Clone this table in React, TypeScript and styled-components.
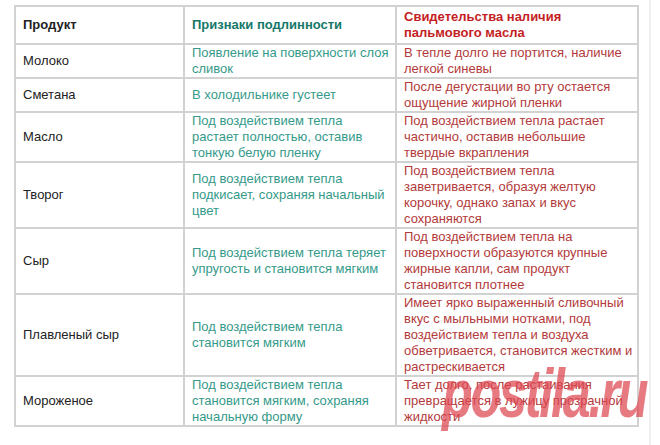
import * as React from 'react';
import styled, { createGlobalStyle } from 'styled-components';

const Global = createGlobalStyle`
  html, body {
    margin: 0;
    padding: 0;
    background: #ffffff;
  }
  body {
    font-family: "Liberation Sans", Arial, sans-serif;
  }
`;

const Page = styled.div`
  position: relative;
  width: 660px;
  height: 445px;
  overflow: hidden;
  box-sizing: border-box;
  padding: 5px 0 0 14px;
  background: #ffffff;
`;

const Edge = styled.div`
  position: absolute;
  top: 0;
  bottom: 0;
  left: 649px;
  width: 2px;
  background: #efefef;
`;

const Table = styled.table`
  border-collapse: collapse;
  table-layout: fixed;
  width: 623px;
  border: 2px solid #c4c4c4;
  font-size: 13px;
  line-height: 16px;
`;

const Cell = styled.td<{ $tone: 'base' | 'ok' | 'bad'; $head?: boolean }>`
  border: 2px solid #d2d2d2;
  padding: ${(p) => (p.$head ? '2px' : '0')} ${(p) => (p.$tone === 'bad' ? '2px' : '6px')}
    ${(p) => (p.$head ? '2px' : '0')} 7px;
  vertical-align: middle;
  font-weight: ${(p) => (p.$head ? 700 : 400)};
  color: ${(p) =>
    p.$tone === 'base'
      ? '#222222'
      : p.$tone === 'ok'
      ? p.$head
        ? '#16786a'
        : '#359a8a'
      : p.$head
      ? '#c41e24'
      : '#b33a3a'};
`;

const Watermark = styled.div`
  position: absolute;
  left: 442px;
  top: 354px;
  font-family: "Liberation Sans", Arial, sans-serif;
  font-size: 68px;
  font-weight: 700;
  font-style: italic;
  letter-spacing: -3px;
  color: rgba(222, 70, 80, 0.72);
  transform: scaleX(0.74);
  transform-origin: left top;
  pointer-events: none;
  white-space: nowrap;
`;

type Row = { name: string; real: string; palm: string };

const rows: Row[] = [
  {
    name: 'Молоко',
    real: 'Появление на поверхности слоя сливок',
    palm: 'В тепле долго не портится, наличие легкой синевы',
  },
  {
    name: 'Сметана',
    real: 'В холодильнике густеет',
    palm: 'После дегустации во рту остается ощущение жирной пленки',
  },
  {
    name: 'Масло',
    real: 'Под воздействием тепла растает полностью, оставив тонкую белую пленку',
    palm: 'Под воздействием тепла растает частично, оставив небольшие твердые вкрапления',
  },
  {
    name: 'Творог',
    real: 'Под воздействием тепла подкисает, сохраняя начальный цвет',
    palm: 'Под воздействием тепла заветривается, образуя желтую корочку, однако запах и вкус сохраняются',
  },
  {
    name: 'Сыр',
    real: 'Под воздействием тепла теряет упругость и становится мягким',
    palm: 'Под воздействием тепла на поверхности образуются крупные жирные капли, сам продукт становится плотнее',
  },
  {
    name: 'Плавленый сыр',
    real: 'Под воздействием тепла становится мягким',
    palm: 'Имеет ярко выраженный сливочный вкус с мыльными нотками, под воздействием тепла и воздуха обветривается, становится жестким и растрескивается',
  },
  {
    name: 'Мороженое',
    real: 'Под воздействием тепла становится мягким, сохраняя начальную форму',
    palm: 'Тает долго, после растаивания превращается в лужицу прозрачной жидкости',
  },
];

export default function App() {
  return (
    <Page>
      <Global />
      <Table>
        <colgroup>
          <col style={{ width: 169 }} />
          <col style={{ width: 212 }} />
          <col style={{ width: 242 }} />
        </colgroup>
        <tbody>
          <tr>
            <Cell $tone="base" $head>Продукт</Cell>
            <Cell $tone="ok" $head>Признаки подлинности</Cell>
            <Cell $tone="bad" $head>Свидетельства наличия пальмового масла</Cell>
          </tr>
          {rows.map((r) => (
            <tr key={r.name}>
              <Cell $tone="base">{r.name}</Cell>
              <Cell $tone="ok">{r.real}</Cell>
              <Cell $tone="bad">{r.palm}</Cell>
            </tr>
          ))}
        </tbody>
      </Table>
      <Edge />
      <Watermark>postila.ru</Watermark>
    </Page>
  );
}
